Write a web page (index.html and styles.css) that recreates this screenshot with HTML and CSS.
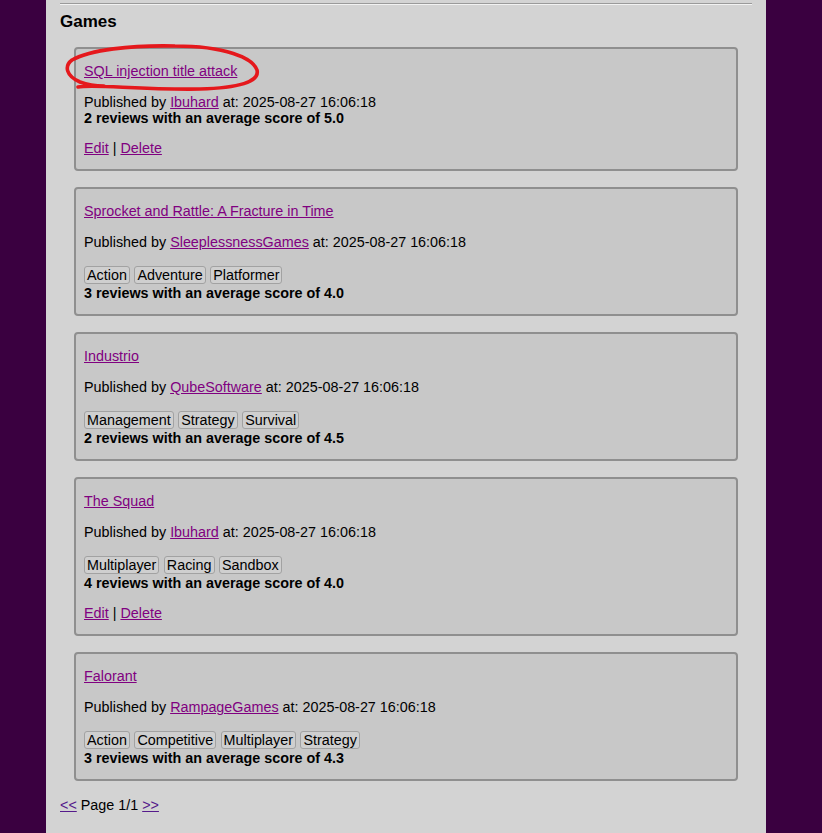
FILE: index.html
```html
<!DOCTYPE html>
<html>
<head>
<meta charset="utf-8">
<title>Games</title>
<link rel="stylesheet" href="styles.css">
</head>
<body>
<div class="page">
  <hr class="rule">
  <h3 class="heading">Games</h3>
  <div class="games">
    <div class="card">
      <p class="title"><a class="visited" href="#">SQL injection title attack</a></p>
      <p class="meta">Published by <a class="visited" href="#">Ibuhard</a> at: 2025-08-27 16:06:18</p>
      <div class="score">2 reviews with an average score of 5.0</div>
      <p class="actions"><a class="visited" href="#">Edit</a> | <a class="visited" href="#">Delete</a></p>
    </div>
    <div class="card">
      <p class="title"><a class="visited" href="#">Sprocket and Rattle: A Fracture in Time</a></p>
      <p class="meta">Published by <a class="visited" href="#">SleeplessnessGames</a> at: 2025-08-27 16:06:18</p>
      <div class="tags"><span class="tag">Action</span><span class="tag">Adventure</span><span class="tag">Platformer</span></div>
      <div class="score last">3 reviews with an average score of 4.0</div>
    </div>
    <div class="card">
      <p class="title"><a class="visited" href="#">Industrio</a></p>
      <p class="meta">Published by <a class="visited" href="#">QubeSoftware</a> at: 2025-08-27 16:06:18</p>
      <div class="tags"><span class="tag">Management</span><span class="tag">Strategy</span><span class="tag">Survival</span></div>
      <div class="score last">2 reviews with an average score of 4.5</div>
    </div>
    <div class="card">
      <p class="title"><a class="visited" href="#">The Squad</a></p>
      <p class="meta">Published by <a class="visited" href="#">Ibuhard</a> at: 2025-08-27 16:06:18</p>
      <div class="tags"><span class="tag">Multiplayer</span><span class="tag">Racing</span><span class="tag">Sandbox</span></div>
      <div class="score">4 reviews with an average score of 4.0</div>
      <p class="actions"><a class="visited" href="#">Edit</a> | <a class="visited" href="#">Delete</a></p>
    </div>
    <div class="card">
      <p class="title"><a class="visited" href="#">Falorant</a></p>
      <p class="meta">Published by <a class="visited" href="#">RampageGames</a> at: 2025-08-27 16:06:18</p>
      <div class="tags"><span class="tag">Action</span><span class="tag">Competitive</span><span class="tag">Multiplayer</span><span class="tag">Strategy</span></div>
      <div class="score last">3 reviews with an average score of 4.3</div>
    </div>
  </div>
  <p class="pager"><a class="plain" href="#">&lt;&lt;</a> Page 1/1 <a class="plain" href="#">&gt;&gt;</a></p>
</div>
<svg class="scribble" width="822" height="120" viewBox="0 0 822 120" aria-hidden="true">
  <path d="M78 87 C95 84 140 90 200 89 C238 88 260 82 257 70 C253 58 225 46 175 46 C130 45 90 50 72 60 C64 66 66 76 80 82 C88 85 95 86 104 86" fill="none" stroke="#e5181c" stroke-width="3.6" stroke-linecap="round" stroke-linejoin="round"/>
</svg>
</body>
</html>
```

FILE: styles.css
```css
html, body {
  margin: 0;
  padding: 0;
  background: #3a0040;
  min-height: 100%;
}

body {
  font-family: "Liberation Sans", Arial, sans-serif;
  font-size: 14.35px;
  color: #000;
  position: relative;
}

.page {
  width: 692px;
  margin-left: 46px;
  padding: 0 14px;
  background: #d3d3d3;
  min-height: 833px;
  box-sizing: content-box;
  overflow: hidden;
}

.rule {
  margin: 3px 0 0;
  border: 0;
  border-top: 1px solid #9a9a9a;
  border-bottom: 1px solid #f2f2f2;
  height: 0;
}

.heading {
  font-size: 17px;
  font-weight: bold;
  margin: 7px 0 15px;
  line-height: 20px;
}

.games {
  display: flex;
  flex-direction: column;
  gap: 16px;
}

.card {
  margin: 0 14px;
  border: 2px solid #8f8f8f;
  border-radius: 4px;
  background: #c8c8c8;
  padding: 0 8px;
}

.card p {
  line-height: 16px;
}

.card .title {
  margin: 14px 0 15px;
}

.card .meta {
  margin: 0;
}

.card .actions {
  margin: 14px 0 13px;
}

.tags {
  display: flex;
  gap: 4.5px;
  margin: 16px 0 1px;
}

.tag {
  display: block;
  border: 1px solid #a2a2a2;
  border-radius: 3px;
  background: #cfcfcf;
  padding: 0 2px;
  line-height: 16px;
}

.score {
  font-weight: bold;
  line-height: 16px;
}

.score.last {
  margin-bottom: 13px;
}

a.visited {
  color: #800080;
}

a.plain {
  color: #551a8b;
}

.pager {
  margin: 16px 0 0;
  line-height: 16px;
}

.scribble {
  position: absolute;
  left: 0;
  top: 0;
  pointer-events: none;
}
```
